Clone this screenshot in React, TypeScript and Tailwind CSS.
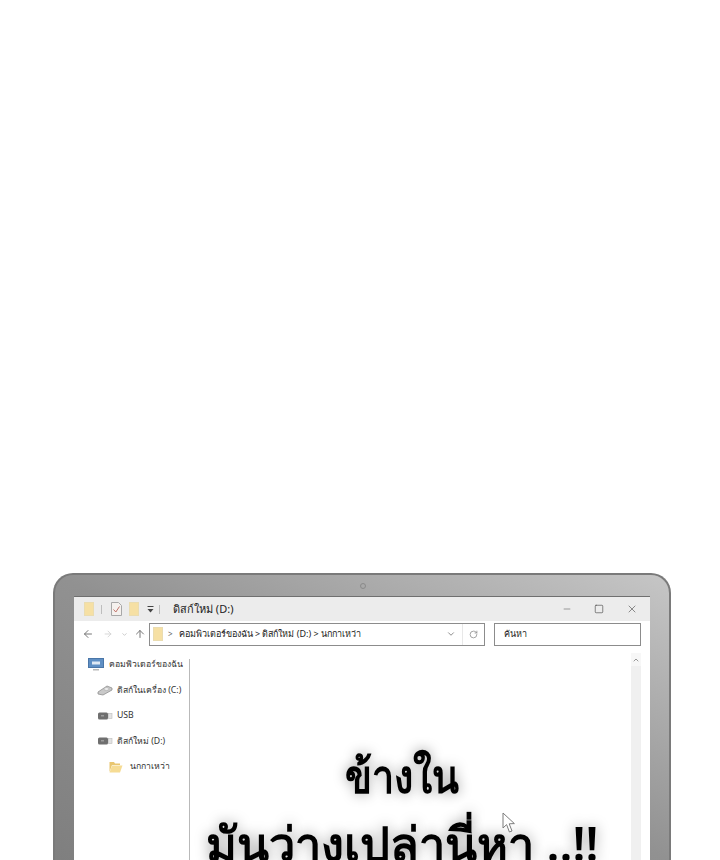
import { ChevronDown, ChevronUp, ArrowLeft, ArrowRight, ArrowUp, RotateCw, Minus, Square, X } from "lucide-react";

const thai = "font-['Noto_Sans','DejaVu_Sans','Liberation_Sans',sans-serif]";

function Note({ className = "" }: { className?: string }) {
  return <div className={`w-[10px] h-[14px] bg-[#f6e0a4] border border-[#eadcb0] ${className}`} />;
}

function MonitorIcon() {
  return (
    <svg width="16" height="14" viewBox="0 0 16 14">
      <rect x="0.5" y="0.5" width="15" height="9" fill="#5f8fc4" stroke="#4a76a8" />
      <rect x="4" y="3.5" width="8" height="3" fill="#dfe9f4" />
      <rect x="5" y="11" width="6" height="1.5" fill="#b9b9b9" />
    </svg>
  );
}

function DiskIcon() {
  return (
    <svg width="16" height="11" viewBox="0 0 16 11">
      <path d="M1 7 L10 1 L15 3 L15 5 L6 10 L1 9 Z" fill="#c9c9c9" stroke="#8f8f8f" strokeWidth="0.8" />
      <ellipse cx="9.5" cy="4" rx="2.6" ry="1.4" fill="#eeeeee" stroke="#9a9a9a" strokeWidth="0.5" />
    </svg>
  );
}

function DriveIcon() {
  return (
    <svg width="15" height="8" viewBox="0 0 15 8">
      <rect x="0" y="0.5" width="10" height="7" rx="1.5" fill="#6f6f6f" />
      <rect x="3" y="3" width="3" height="1.5" fill="#9c9c9c" />
      <rect x="10.5" y="1.5" width="3.5" height="5" fill="#e3e3e3" stroke="#bcbcbc" strokeWidth="0.6" />
    </svg>
  );
}

function FolderIcon() {
  return (
    <svg width="14" height="12" viewBox="0 0 14 12">
      <path d="M0.5 1 H5 L6 2.5 H11 V4 H3 L0.5 11 Z" fill="#e9c670" />
      <path d="M3 4.5 H13.5 L11 11.5 H0.5 Z" fill="#f6dc94" />
    </svg>
  );
}

function CheckPageIcon() {
  return (
    <svg width="11" height="14" viewBox="0 0 11 14" className="ml-[9px]">
      <path d="M0.5 0.5 H7.5 L10.5 3.5 V13.5 H0.5 Z" fill="#f5f1ee" stroke="#a8a8a8" />
      <path d="M2.5 7.5 L4.8 10 L8.5 4.5" fill="none" stroke="#c0736a" strokeWidth="1" />
    </svg>
  );
}

function QuickAccessArrow() {
  return (
    <svg width="7" height="7" viewBox="0 0 7 7" className="ml-[8px]">
      <rect x="0.5" y="0" width="6" height="1" fill="#444" />
      <path d="M0.5 3 H6.5 L3.5 6.5 Z" fill="#444" />
    </svg>
  );
}

function CursorIcon() {
  return (
    <svg width="14" height="22" viewBox="0 0 14 22">
      <path d="M1 1 L1 16 L4.6 12.6 L7.4 20 L10 19 L7.2 11.8 L12.4 11.6 Z" fill="#ffffff" stroke="#7b7b7b" strokeWidth="1" strokeLinejoin="round" />
    </svg>
  );
}

function TreeRow({ icon, label, indent, gap }: { icon: React.ReactNode; label: string; indent: string; gap: string }) {
  return (
    <div className={`flex items-center h-[25.5px] ${indent} ${gap}`}>
      {icon}
      <span className="text-[8.7px] text-[#333] whitespace-nowrap">{label}</span>
    </div>
  );
}

export default function App() {
  return (
    <div className={`h-[860px] bg-white overflow-hidden flex flex-col pt-[573px] pl-[53px] ${thai}`}>
      <div className="relative w-[618px] flex-1 min-h-0 flex flex-col rounded-t-[20px] border-2 border-b-0 border-[#7a7a7a] bg-gradient-to-bl from-[#c6c6c6] via-[#919191] to-[#7f7f7f] px-[19px] pt-[21px] blur-[0.4px]">
        {/* camera */}
        <div className="absolute left-[305px] top-[8px] w-[6px] h-[6px] rounded-full border border-[#8a8a8a]" />
        <div className="flex-1 min-h-0 flex flex-col bg-white border-t border-[#6f6f6f]">
          {/* title bar */}
          <div className="h-[24px] shrink-0 bg-[#ececec] flex items-center pl-[10px]">
            <Note />
            <div className="w-px h-[9px] bg-[#bdbdbd] ml-[7px]" />
            <CheckPageIcon />
            <Note className="ml-[7px]" />
            <QuickAccessArrow />
            <div className="w-px h-[9px] bg-[#bdbdbd] ml-[5px]" />
            <span className="ml-[13px] text-[11px] text-[#222] whitespace-nowrap">ดิสก์ใหม่ (D:)</span>
            <div className="ml-auto mr-[12px] flex items-center gap-[22px] text-[#444]">
              <Minus size={10} strokeWidth={1.2} />
              <Square size={10} strokeWidth={1.5} />
              <X size={12} strokeWidth={1.2} />
            </div>
          </div>
          {/* address row */}
          <div className="h-[26px] shrink-0 flex items-center pl-[8px] pr-[9px]">
            <ArrowLeft size={12} className="text-[#777]" />
            <ArrowRight size={10} className="ml-[9px] text-[#d0d0d0]" />
            <ChevronDown size={7} className="ml-[8px] text-[#aaa]" />
            <ArrowUp size={12} className="ml-[6px] text-[#777]" />
            <div className="ml-[3px] w-[336px] h-[23px] border border-[#8c8c8c] flex items-center pl-[3px]">
              <Note />
              <span className="ml-[5px] text-[8px] text-[#666]">&gt;</span>
              <span className="ml-[6px] text-[9px] text-[#222] whitespace-nowrap">คอมพิวเตอร์ของฉัน &gt; ดิสก์ใหม่ (D:) &gt; นกกาเหว่า</span>
              <ChevronDown size={10} className="ml-auto mr-[6px] text-[#777]" />
              <div className="w-px h-full bg-[#e8e8e8]" />
              <RotateCw size={9} className="mx-[6px] text-[#888]" />
            </div>
            <div className="ml-[9px] flex-1 h-[23px] border border-[#8c8c8c] flex items-center pl-[9px] text-[9px] text-[#222]">ค้นหา</div>
          </div>
          {/* body */}
          <div className="flex-1 min-h-0 flex pt-[6px] pr-[9px]">
            <div className="w-[116px] shrink-0 mt-[6px] border-r border-[#b9b9b9]">
              <div className="-mt-[7px]">
                <TreeRow icon={<MonitorIcon />} label="คอมพิวเตอร์ของฉัน" indent="pl-[14px]" gap="gap-[5px]" />
                <TreeRow icon={<DiskIcon />} label="ดิสก์ในเครื่อง (C:)" indent="pl-[23px]" gap="gap-[4px]" />
                <TreeRow icon={<DriveIcon />} label="USB" indent="pl-[24px]" gap="gap-[4px]" />
                <TreeRow icon={<DriveIcon />} label="ดิสก์ใหม่ (D:)" indent="pl-[24px]" gap="gap-[4px]" />
                <TreeRow icon={<FolderIcon />} label="นกกาเหว่า" indent="pl-[35px]" gap="gap-[7px]" />
              </div>
            </div>
            <div className="relative flex-1 min-w-0 flex flex-col items-center pt-[88px] pr-[16px]">
              <div className="text-[47px] leading-[68px] font-semibold text-black whitespace-nowrap text-center [text-shadow:0_0_14px_rgba(0,0,0,0.4)]">
                <div className="scale-x-[0.84]">ข้างใน</div>
                <div>มันว่างเปล่านี่หา ..!!</div>
              </div>
              <div className="absolute left-[312px] top-[159px]">
                <CursorIcon />
              </div>
            </div>
            <div className="w-[10px] shrink-0 bg-[#f0f0f0] flex flex-col">
              <div className="h-[13px] bg-[#f7f7f7] flex items-center justify-center">
                <ChevronUp size={8} className="text-[#666]" />
              </div>
            </div>
          </div>
        </div>
      </div>
    </div>
  );
}
